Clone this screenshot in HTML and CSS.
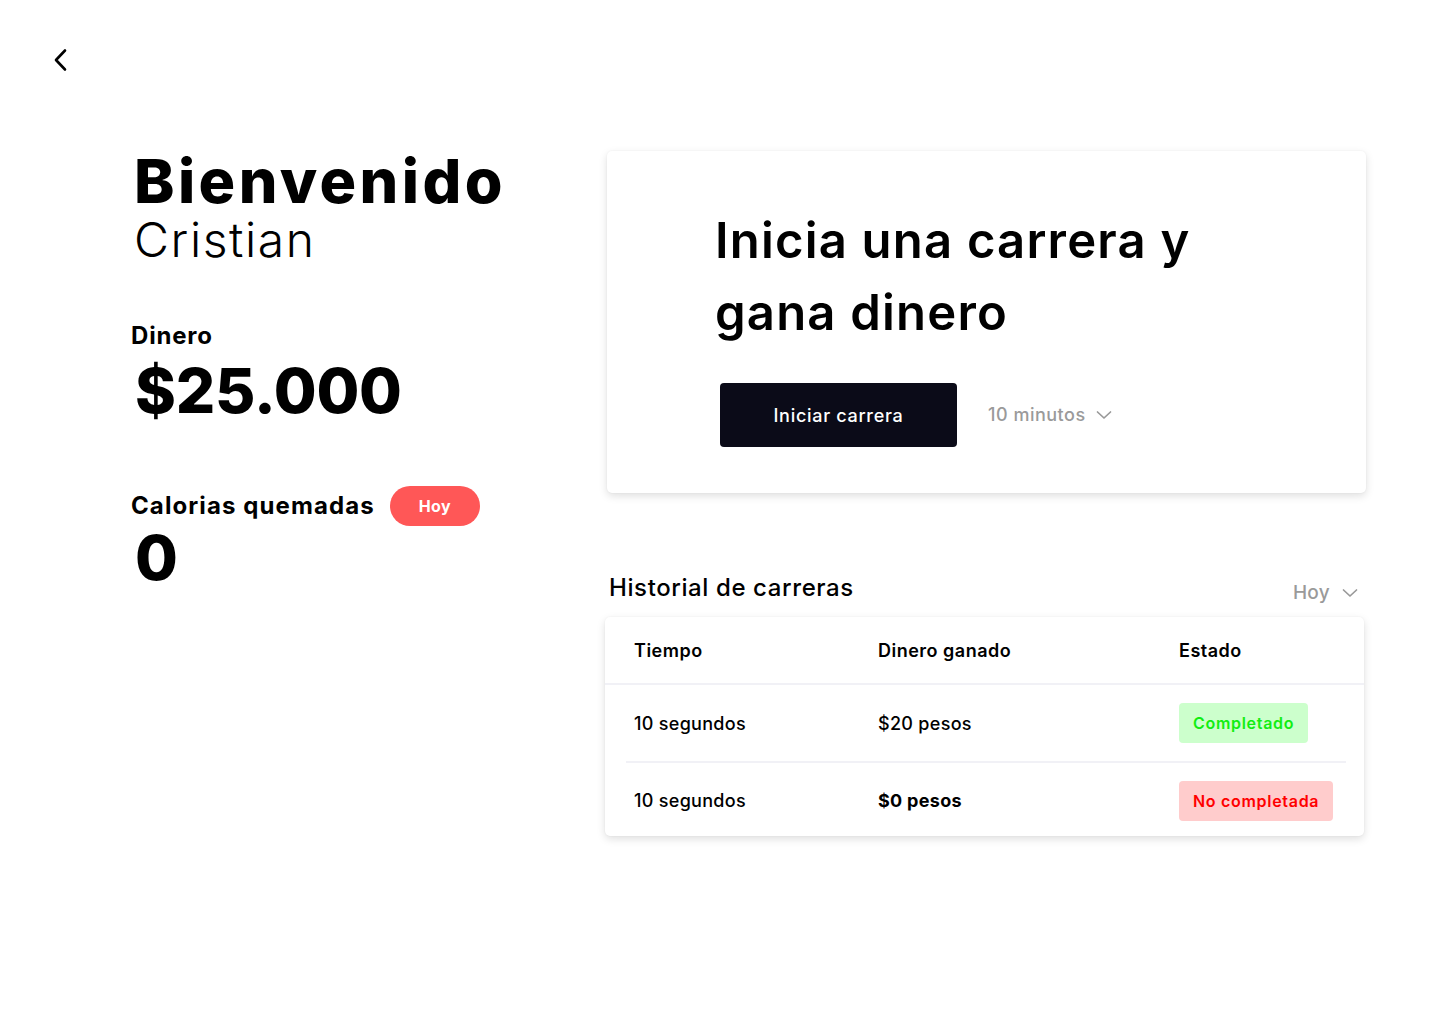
FILE: index.html
```html
<!DOCTYPE html>
<html lang="es">
<head>
<meta charset="utf-8">
<title>Inicio</title>
<link rel="stylesheet" href="styles.css">
</head>
<body>
<header class="topbar">
  <button class="back" aria-label="Volver">
    <svg width="24" height="24" viewBox="0 0 24 24"><path d="M16 2.5 L7 12 L16 21.5" fill="none" stroke="#000" stroke-width="2.6" stroke-linecap="round" stroke-linejoin="round"/></svg>
  </button>
</header>
<main class="main">
  <section class="left">
    <h1 class="welcome">Bienvenido</h1>
    <p class="name">Cristian</p>
    <div class="stat money">
      <h2 class="label">Dinero</h2>
      <p class="value">$25.000</p>
    </div>
    <div class="stat calories">
      <div class="label-row">
        <h2 class="label">Calorias quemadas</h2>
        <span class="pill">Hoy</span>
      </div>
      <p class="value">0</p>
    </div>
  </section>
  <section class="right">
    <div class="card hero">
      <h2 class="hero-title">Inicia una carrera y<br>gana dinero</h2>
      <div class="hero-actions">
        <button class="btn-primary">Iniciar carrera</button>
        <div class="select">10 minutos
          <svg width="16" height="10" viewBox="0 0 16 10"><path d="M1.5 2 L8 8 L14.5 2" fill="none" stroke="#999" stroke-width="1.7" stroke-linecap="round" stroke-linejoin="round"/></svg>
        </div>
      </div>
    </div>
    <div class="history-head">
      <h2 class="history-title">Historial de carreras</h2>
      <div class="select small">Hoy
        <svg width="16" height="10" viewBox="0 0 16 10"><path d="M1.5 2 L8 8 L14.5 2" fill="none" stroke="#999" stroke-width="1.7" stroke-linecap="round" stroke-linejoin="round"/></svg>
      </div>
    </div>
    <div class="card table">
      <div class="row head">
        <span>Tiempo</span><span>Dinero ganado</span><span>Estado</span>
      </div>
      <div class="row first">
        <span>10 segundos</span><span>$20 pesos</span><span><em class="badge ok">Completado</em></span>
      </div>
      <div class="row last">
        <span>10 segundos</span><span class="strong">$0 pesos</span><span><em class="badge no">No completada</em></span>
      </div>
    </div>
  </section>
</main>
</body>
</html>
```
FILE: styles.css
```css
* { box-sizing: border-box; }
html, body { margin: 0; padding: 0; background: #fff; }
body { font-family: Inter, "Noto Sans", "DejaVu Sans", sans-serif; color: #000; min-height: 1024px; }
h1, h2, p { margin: 0; }

.topbar { height: 151px; padding: 48px 0 0 49px; }
.back { border: 0; background: none; padding: 0; width: 24px; height: 24px; display: block; cursor: pointer; }
.back svg { display: block; }

.main { display: flex; padding-left: 131px; padding-bottom: 60px; }
.left { width: 475px; flex: none; }
.right { width: 760px; flex: none; }

.welcome { font-size: 61px; font-weight: 800; line-height: 60px; margin: 0 0 0 3px; letter-spacing: 3.4px; }
.name { font-size: 48px; font-weight: 300; line-height: 52px; margin: 3px 0 0 3px; letter-spacing: 1.6px; }

.stat { margin-top: 55px; }
.label { font-size: 24px; font-weight: 700; line-height: 30px; letter-spacing: 0.8px; }
.value { font-size: 62px; font-weight: 800; line-height: 72px; margin: 4px 0 0 4px; letter-spacing: -0.2px; }
.calories { margin-top: 59px; }
.calories .label { letter-spacing: 1.1px; }
.calories .value { margin-top: -4px; }
.label-row { display: flex; align-items: center; gap: 15px; }
.pill { display: inline-flex; align-items: center; justify-content: center; width: 90px; height: 40px; border-radius: 20px; background: #ff5757; color: #fff; font-size: 16px; font-weight: 700; letter-spacing: 0.4px; }

.card { background: #fff; border-radius: 5px; box-shadow: 0 3px 8px rgba(0,0,0,0.13), 0 0 2px rgba(0,0,0,0.06); }
.hero { margin-left: 1px; width: 759px; height: 342px; padding: 54px 0 0 108px; }
.hero-title { font-size: 49px; font-weight: 600; line-height: 72px; letter-spacing: 1.2px; }
.hero-actions { display: flex; align-items: center; gap: 31px; margin: 34px 0 0 5px; }
.btn-primary { width: 237px; height: 64px; border: 0; border-radius: 4px; background: #0b0b18; color: #fff; font-family: inherit; font-size: 18px; font-weight: 500; letter-spacing: 0.7px; cursor: pointer; padding: 0; }
.select { display: flex; align-items: center; gap: 10px; color: #9a9a9a; font-size: 18px; font-weight: 500; letter-spacing: 0.5px; line-height: 24px; }
.select svg { display: block; }

.history-head { display: flex; justify-content: space-between; align-items: flex-start; margin-top: 77px; padding: 0 8px 0 3px; height: 47px; }
.history-title { font-size: 24px; font-weight: 500; line-height: 36px; letter-spacing: 0.6px; }
.select.small { margin-top: 11px; font-size: 19px; letter-spacing: 0.3px; gap: 12px; }

.table { margin-left: -1px; width: 759px; }
.row { display: grid; grid-template-columns: 244px 301px 1fr; padding-left: 29px; font-size: 18px; font-weight: 500; letter-spacing: 0.3px; align-items: center; }
.row.head { height: 68px; font-weight: 600; letter-spacing: 0.5px; border-bottom: 2px solid #f1f1f6; }
.row.first { height: 78px; padding-bottom: 2px; position: relative; }
.row.first::after { content: ""; position: absolute; left: 21px; right: 18px; bottom: 0; height: 2px; background: #f1f1f6; }
.row.last { height: 73px; padding-top: 2px; }
.strong { font-weight: 700; }
.badge { font-style: normal; display: inline-flex; align-items: center; height: 40px; padding: 0 14px; border-radius: 4px; font-size: 16px; font-weight: 600; letter-spacing: 0.7px; }
.badge.ok { background: #ccffcc; color: #11ee11; }
.badge.no { background: #ffcccc; color: #ff0000; }
```
